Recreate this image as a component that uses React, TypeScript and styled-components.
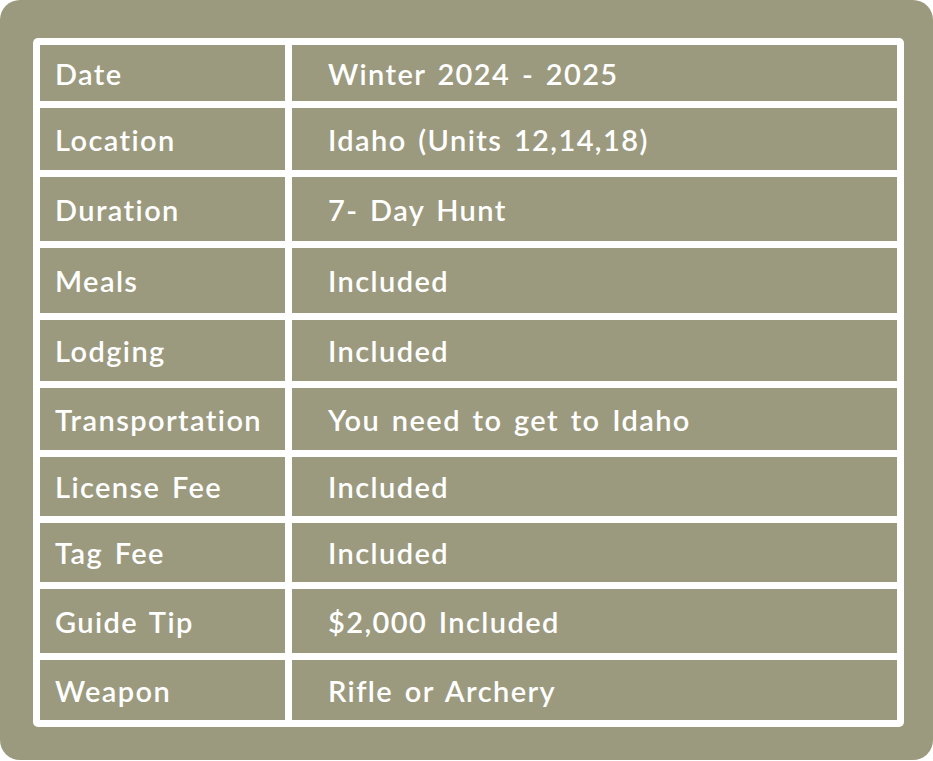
import React from "react";
import styled, { createGlobalStyle } from "styled-components";

const GlobalStyle = createGlobalStyle`
  html, body {
    margin: 0;
    padding: 0;
    background: #ffffff;
  }
  body {
    font-family: Lato, "Open Sans", "Liberation Sans", sans-serif;
  }
`;

const Card = styled.div`
  box-sizing: border-box;
  width: 933px;
  height: 760px;
  background: #9b9a7e;
  border-radius: 20px;
  padding: 38px 29px 33px 33px;
`;

const Table = styled.div`
  display: grid;
  row-gap: 7px;
  padding: 7px;
  background: #ffffff;
  border-radius: 5px;
  width: 871px;
  box-sizing: border-box;
`;

const Row = styled.div<{ $height: number }>`
  display: grid;
  grid-template-columns: 245px 605px;
  column-gap: 7px;
  height: ${(p) => p.$height}px;
`;

const Cell = styled.div<{ $pad: number }>`
  display: flex;
  align-items: center;
  background: #9b9a7e;
  color: #ffffff;
  font-family: Lato, "Open Sans", "Liberation Sans", sans-serif;
  font-weight: 600;
  font-size: 29px;
  letter-spacing: 1.4px;
  word-spacing: 3px;
  padding-left: ${(p) => p.$pad}px;
  white-space: nowrap;
`;

const rows: { label: string; value: string; h: number }[] = [
  { label: "Date", value: "Winter 2024 - 2025", h: 56 },
  { label: "Location", value: "Idaho (Units 12,14,18)", h: 62 },
  { label: "Duration", value: "7- Day Hunt", h: 64 },
  { label: "Meals", value: "Included", h: 65 },
  { label: "Lodging", value: "Included", h: 61 },
  { label: "Transportation", value: "You need to get to Idaho", h: 62 },
  { label: "License Fee", value: "Included", h: 59 },
  { label: "Tag Fee", value: "Included", h: 59 },
  { label: "Guide Tip", value: "$2,000 Included", h: 64 },
  { label: "Weapon", value: "Rifle or Archery", h: 60 },
];

export default function App() {
  return (
    <>
      <GlobalStyle />
      <Card>
        <Table>
          {rows.map((r) => (
            <Row key={r.label} $height={r.h}>
              <Cell $pad={15}>{r.label}</Cell>
              <Cell $pad={36}>{r.value}</Cell>
            </Row>
          ))}
        </Table>
      </Card>
    </>
  );
}
